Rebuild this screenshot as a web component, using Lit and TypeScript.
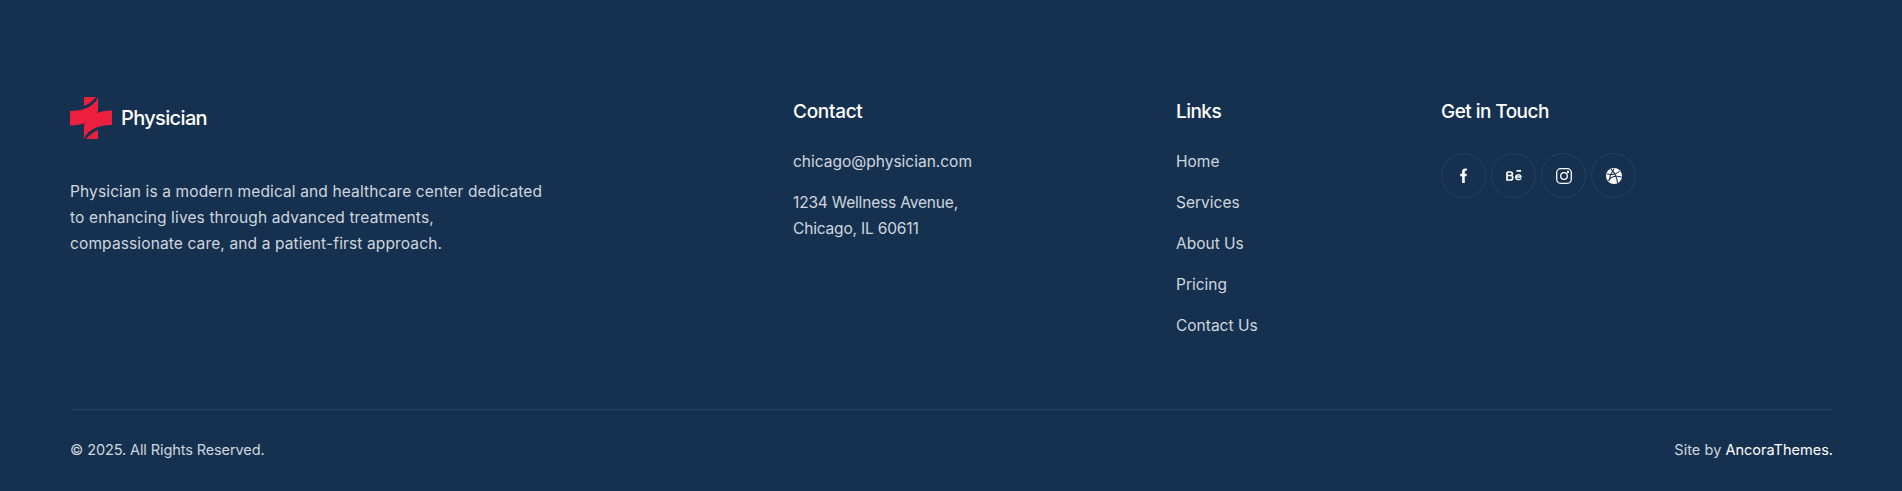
import { LitElement, html, css } from "lit";
import { customElement } from "lit/decorators.js";

const links = ["Home", "Services", "About Us", "Pricing", "Contact Us"];

@customElement("app-root")
export class AppRoot extends LitElement {
  static styles = css`
    :host { display: block; background: #163150; height: 491px; box-sizing: border-box; padding: 96px 69px 0 70px; font-family: Inter, "Liberation Sans", sans-serif; color: #cfd6de; font-size: 15.5px; line-height: 26px; overflow: hidden; }
    .top { display: grid; grid-template-columns: 723px 383px 265px 1fr; height: 313px; border-bottom: 1px solid #25405f; }
    .logo { display: flex; align-items: center; gap: 9px; height: 43px; margin-bottom: 40px; color: #fff; font-size: 20px; font-weight: 500; letter-spacing: -0.65px; }
    .logo span { margin-top: 1px; }
    p { margin: 0; letter-spacing: 0.13px; }
    h4 { margin: 2px 0 23px; font-size: 19px; line-height: 28px; font-weight: 500; color: #fff; letter-spacing: -0.3px; }
    h4.tight { letter-spacing: -0.55px; }
    .col { display: flex; flex-direction: column; }
    .list { display: flex; flex-direction: column; gap: 15px; }
    .addr { letter-spacing: -0.17px; }
    .social { display: flex; gap: 5px; margin-top: 4px; }
    .social div { width: 45px; height: 45px; border: 1px solid #25405f; border-radius: 50%; display: flex; align-items: center; justify-content: center; box-sizing: border-box; }
    .bottom { display: flex; justify-content: space-between; padding-top: 27px; font-size: 14.5px; letter-spacing: -0.1px; }
    .site { letter-spacing: 0.05px; }
    .bottom b { color: #fff; font-weight: 400; letter-spacing: 0; }
  `;
  render() {
    return html`
      <div class="top">
        <div>
          <div class="logo">
            <svg width="42" height="42" viewBox="0 0 42 42" fill="#ed1f3e"><path d="M0 14C13 14 24 10 28 0V14C25 23 14 28.500 0 28.500Z"/><path d="M42 28C29 28 18 32 14 42V28C17 19 28 13.500 42 13.500Z"/><path d="M14 0H26C22 4.500 18 7.500 14 9Z"/><path d="M28 42H16C20 37.500 24 34.500 28 33Z"/></svg>
            <span>Physician</span>
          </div>
          <p>Physician is a modern medical and healthcare center dedicated<br>to enhancing lives through advanced treatments,<br>compassionate care, and a patient-first approach.</p>
        </div>
        <div class="col">
          <h4>Contact</h4>
          <div class="list"><div>chicago@physician.com</div><div class="addr">1234 Wellness Avenue,<br>Chicago, IL 60611</div></div>
        </div>
        <div class="col">
          <h4 class="tight">Links</h4>
          <div class="list">${links.map((l) => html`<div>${l}</div>`)}</div>
        </div>
        <div class="col">
          <h4 class="tight">Get in Touch</h4>
          <div class="social">
            <div><svg width="14" height="15" viewBox="0 0 14 16"><path fill="#fff" d="M5 16V8.800H3V6H5V4C5 1.500 6.300 .500 8.300 .500H10V3H9C8 3 7.800 3.500 7.800 4.200V6H10L9.600 8.800H7.800V16Z"/></svg></div>
            <div><svg width="16" height="11" viewBox="0 0 16 11"><path fill="none" stroke="#fff" stroke-width="1.700" d="M1 2H4.500C7 2 7 5.500 4.500 5.500H1M4.500 5.500C7.500 5.500 7.500 10 4.500 10H1V2M10.500 .8H15"/><path fill="none" stroke="#fff" stroke-width="1.300" d="M9.700 7H15C15 4 9.700 4 9.700 7.200C9.700 10.200 14 10.200 15 8.700"/></svg></div>
            <div><svg width="16" height="16" viewBox="0 0 16 16" fill="none" stroke="#fff" stroke-width="1.300"><rect x=".7" y=".7" width="14.600" height="14.600" rx="4"/><circle cx="8" cy="8" r="3.300"/><circle cx="12" cy="4" r=".5" fill="#fff"/></svg></div>
            <div><svg width="16" height="16" viewBox="0 0 16 16"><circle cx="8" cy="8" r="8" fill="#fff"/><path fill="none" stroke="#163150" stroke-width="1.100" d="M5 1.200C8 4 11 9 11.500 15M1 6C6 7 11 6 13.500 3M2.500 13C4 9 9 7 15.500 9M8 .7C5 5 3.500 9 3 13"/></svg></div>
          </div>
        </div>
      </div>
      <div class="bottom"><div>© 2025. All Rights Reserved.</div><div class="site">Site by <b>AncoraThemes.</b></div></div>
    `;
  }
}
